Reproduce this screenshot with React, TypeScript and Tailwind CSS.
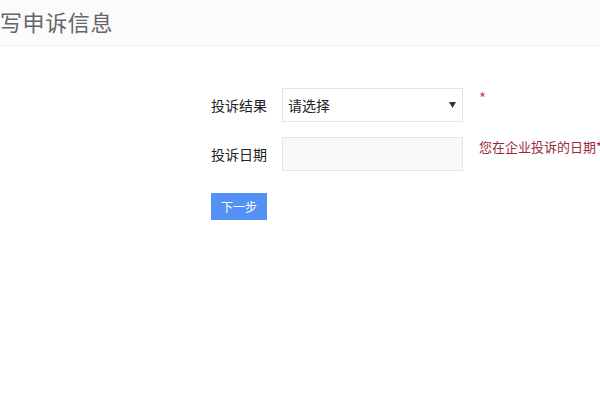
import React from "react";

export default function App() {
  const font = { fontFamily: '"Microsoft YaHei", "Noto Sans CJK SC", sans-serif' };
  return (
    <div className="w-[600px] h-[400px] bg-white overflow-hidden" style={font}>
      <div className="h-[46px] bg-[#fbfafc] border-b border-[#f1eff3] flex items-center">
        <span className="ml-0 mt-[-4px] text-[22px] leading-none text-[#666] tracking-[0.6px]">写申诉信息</span>
      </div>
      <div className="pl-[211px] pt-[42px] flex flex-col">
        <div className="flex items-start h-[34px]">
          <div className="w-[71px] shrink-0 h-[34px] flex items-center text-[14px] text-[#222]">投诉结果</div>
          <div className="w-[181px] shrink-0 h-[34px] border border-[#e6e4e8] bg-white flex items-center justify-between pl-[5px] pr-[6px]">
            <span className="text-[14px] text-[#222]">请选择</span>
            <svg width="7" height="6" viewBox="0 0 7 6"><path d="M0 0H7L3.5 6Z" fill="#333" /></svg>
          </div>
          <span className="ml-[16px] mt-[2px] text-[15px] text-[#c0485a] leading-none">*</span>
        </div>
        <div className="flex items-start h-[34px] mt-[15px]">
          <div className="w-[71px] shrink-0 h-[34px] flex items-center text-[14px] text-[#222]">投诉日期</div>
          <div className="w-[181px] shrink-0 h-[34px] border border-[#e6e4e8] bg-[#faf8fb]" />
          <span className="ml-[16px] shrink-0 mt-[1px] text-[13px] text-[#9a2a3a] whitespace-nowrap leading-[18px]">您在企业投诉的日期*</span>
        </div>
        <div className="mt-[22px]">
          <button className="w-[56px] h-[27px] bg-[#5491f5] text-white text-[12px] flex items-center justify-center">下一步</button>
        </div>
      </div>
    </div>
  );
}
